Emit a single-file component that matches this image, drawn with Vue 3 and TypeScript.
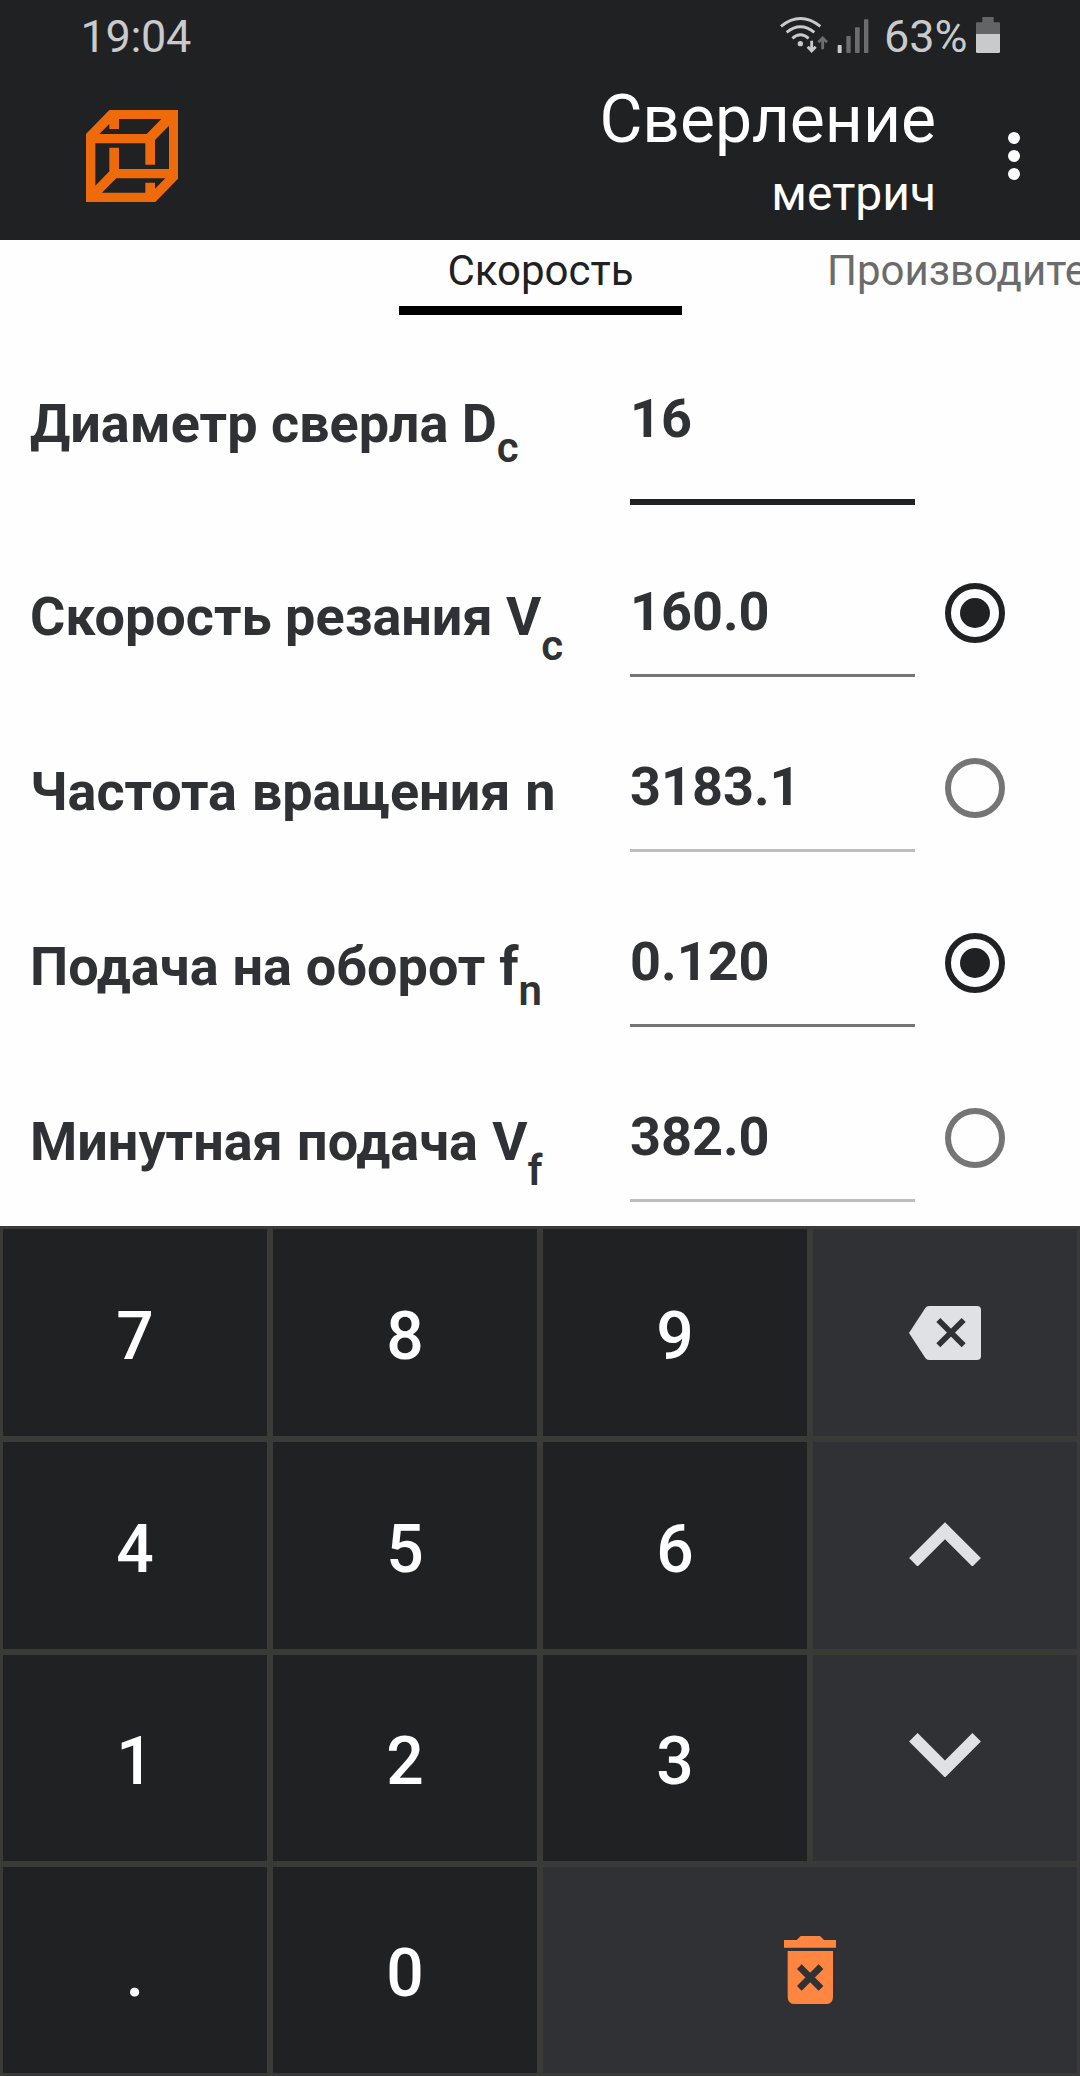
<script setup lang="ts">
import { ref } from 'vue'

interface Field {
  id: string
  label: string
  sub?: string
  subDrop?: number
  value: string
  mode: 'focused' | 'enabled' | 'disabled'
  radio?: boolean
}

const fields = ref<Field[]>([
  { id: 'dc', label: 'Диаметр сверла D', sub: 'c', subDrop: 20, value: '16', mode: 'focused' },
  { id: 'vc', label: 'Скорость резания V', sub: 'c', subDrop: 25, value: '160.0', mode: 'enabled', radio: true },
  { id: 'n', label: 'Частота вращения n', value: '3183.1', mode: 'disabled', radio: false },
  { id: 'fn', label: 'Подача на оборот f', sub: 'n', subDrop: 20, value: '0.120', mode: 'enabled', radio: true },
  { id: 'vf', label: 'Минутная подача V', sub: 'f', subDrop: 25, value: '382.0', mode: 'disabled', radio: false },
])

const keys: string[] = ['7', '8', '9', 'back', '4', '5', '6', 'up', '1', '2', '3', 'down', '.', '0', 'clear']
const isAction = (k: string) => k.length > 1
</script>

<template>
  <div class="screen">
    <div class="status">
      <span class="time">19:04</span>
      <svg class="signal" viewBox="60 45 270 117" width="90" height="39">
        <g fill="none" stroke="#c9cacc" stroke-width="8.5">
          <path d="M63 79Q121 32 181 79" />
          <path d="M80 97Q121 64 163 97" />
          <path d="M97 115Q121 94 146 115" />
          <path d="M155 122V153M143 140L155 153L167 140" />
          <path d="M188 148V114M175 127L188 114L201 127" stroke="#6c6d6f" />
        </g>
        <circle cx="121" cy="131" r="8" fill="#c9cacc" />
        <rect x="233" y="135" width="12" height="24" rx="2" fill="#c9cacc" />
        <g fill="#6c6d6f">
          <rect x="259" y="108" width="13" height="51" rx="2" />
          <rect x="285" y="82" width="14" height="77" rx="2" />
          <rect x="312" y="58" width="13" height="101" rx="2" />
        </g>
      </svg>
      <span class="percent">63%</span>
      <svg class="battery" viewBox="0 0 72 108" width="24" height="36">
        <path d="M19 0H53V16H69Q72 16 72 19V51H0V19Q0 16 3 16H19Z" fill="#636466" />
        <path d="M0 51H72V104Q72 108 68 108H4Q0 108 0 104Z" fill="#c9cacc" />
      </svg>
    </div>

    <header class="bar">
      <svg class="logo" viewBox="78 330 276 276" width="92" height="92">
        <path
          fill="#ee6a0b"
          fill-rule="evenodd"
          d="M148 330H354V536L286 606H78V402Z M118 402L148 372V387H177V357H304L260 402Z M106 430H256V494H285V420L327 377V507H177V443H148V514L106 557Z M169 535H316L285 566V548H256V578H126Z"
        />
      </svg>
      <div class="titles">
        <div class="title">Сверление</div>
        <div class="subtitle">метрич</div>
      </div>
      <svg class="menu" viewBox="0 0 12 48" width="12" height="48" fill="#fff">
        <circle cx="6" cy="6" r="6" />
        <circle cx="6" cy="24" r="6" />
        <circle cx="6" cy="42" r="6" />
      </svg>
    </header>

    <nav class="tabs">
      <div class="tab active">Скорость</div>
      <div class="tab">Производительность</div>
    </nav>

    <main class="form">
      <div v-for="f in fields" :key="f.id" class="row" :class="[f.mode, `field-${f.id}`]">
        <div class="label">
          {{ f.label }}<sub v-if="f.sub" :style="{ verticalAlign: `-${f.subDrop}px` }">{{ f.sub }}</sub>
        </div>
        <div class="value">{{ f.value }}</div>
        <svg v-if="f.radio !== undefined" class="radio" :class="{ on: f.radio }" viewBox="0 0 60 60" width="60" height="60">
          <circle cx="30" cy="30" r="27" fill="none" stroke="currentColor" stroke-width="6" />
          <circle v-if="f.radio" cx="30" cy="30" r="15" fill="currentColor" />
        </svg>
      </div>
    </main>

    <div class="keypad">
      <div v-for="k in keys" :key="k" class="key" :class="[{ action: isAction(k) }, isAction(k) ? k : '']">
        <span v-if="!isAction(k)">{{ k }}</span>
        <svg v-else-if="k === 'back'" viewBox="0 0 216 162" width="72" height="54">
          <path d="M60 0H204Q216 0 216 12V150Q216 162 204 162H60Q53 162 49 156L0 81L49 6Q53 0 60 0Z" fill="#dfe1e5" />
          <path d="M88 42L164 118M164 42L88 118" stroke="#303134" stroke-width="17" />
        </svg>
        <svg v-else-if="k === 'up'" viewBox="0 0 216 134" width="72" height="44.7">
          <path d="M13 121L108 26L203 121" fill="none" stroke="#dfe1e5" stroke-width="36" />
        </svg>
        <svg v-else-if="k === 'down'" viewBox="0 0 216 134" width="72" height="44.7">
          <path d="M13 13L108 108L203 13" fill="none" stroke="#dfe1e5" stroke-width="36" />
        </svg>
        <svg v-else viewBox="0 0 158 204" width="52.7" height="68">
          <path d="M0 12H38L50 0H108L120 12H158V35H0Z M11 45H147V182Q147 204 125 204H33Q11 204 11 182Z" fill="#ff8640" />
          <path d="M46 92L111 157M111 92L46 157" stroke="#303134" stroke-width="20" />
        </svg>
      </div>
    </div>
  </div>
</template>

<style>
body {
  margin: 0;
  background: #fefefe;
}
</style>

<style scoped>
.screen {
  width: 1080px;
  height: 2076px;
  overflow: hidden;
  display: flex;
  flex-direction: column;
  font-family: Roboto, 'Noto Sans', sans-serif;
  background: #fefefe;
}
.status {
  height: 72px;
  flex: none;
  display: flex;
  align-items: flex-start;
  background: #202123;
  color: #c9cacc;
  font-size: 45px;
  line-height: 54px;
  box-sizing: border-box;
  padding: 10px 80px 0 80.5px;
}
.time {
  flex: 1;
  letter-spacing: -0.3px;
}
.signal {
  margin-top: 5px;
}
.percent {
  box-sizing: border-box;
  width: 106px;
  padding-left: 14px;
}
.battery {
  margin-top: 7px;
}
.bar {
  height: 168px;
  flex: none;
  display: flex;
  background: #202123;
  color: #fff;
}
.logo {
  margin: 38px 0 0 86px;
}
.titles {
  flex: 1;
  text-align: right;
  padding-right: 72px;
}
.title {
  font-size: 66px;
  line-height: 78px;
  margin-top: 9px;
}
.subtitle {
  font-size: 48px;
  line-height: 58px;
  margin-top: 6px;
}
.menu {
  margin: 60px 60px 0 0;
}
.tabs {
  height: 75px;
  flex: none;
  display: flex;
  margin-left: 399px;
  gap: 97px;
  overflow: hidden;
  font-size: 42px;
  line-height: 60px;
  color: #6b6b6b;
}
.tab {
  box-sizing: border-box;
  height: 75px;
  flex: none;
  padding: 1px 48px 0;
}
.tab.active {
  width: 283px;
  padding: 1px 0 0;
  text-align: center;
  color: #202123;
  border-bottom: 9px solid #000;
}
.form {
  flex: none;
  height: 911px;
  padding-top: 15px;
  box-sizing: border-box;
  color: #303134;
  font-size: 54px;
  line-height: 60px;
  font-weight: 700;
}
.row {
  display: flex;
  height: 175px;
  align-items: stretch;
}
.row.focused {
  margin-bottom: -3px;
}
.label {
  width: 600px;
  padding: 85px 0 0 30px;
  box-sizing: border-box;
  white-space: nowrap;
}
.focused .label {
  padding-top: 64px;
}
.label sub {
  font-size: 42px;
  line-height: 0;
  font-weight: 600;
}
.field-n .label {
  word-spacing: 1.3px;
}
.field-fn .label {
  word-spacing: 0.5px;
}
.field-vf .label {
  word-spacing: 0.8px;
}
.value {
  width: 285px;
  margin: 0 30px;
  padding-top: 80px;
  box-sizing: border-box;
  border-bottom: 3px solid #757575;
}
.focused .value {
  padding-top: 59px;
  border-bottom: 6px solid #202123;
}
.disabled .value {
  border-bottom-color: #bdbdbd;
}
.radio {
  margin-top: 81px;
  color: #757575;
}
.radio.on {
  color: #202123;
}
.keypad {
  display: grid;
  grid-template-columns: repeat(4, 270px);
  grid-template-rows: 213px 213px 212px 212px;
  background: #3a3a38;
}
.key {
  margin: 3px;
  background: #202123;
  color: #fff;
  display: flex;
  align-items: center;
  justify-content: center;
  font-size: 66px;
  font-weight: 500;
}
.key span {
  padding-top: 7px;
}
.key.action {
  background: #303134;
}
.key.up svg {
  margin-bottom: 3px;
}
.key.down svg {
  margin-bottom: 6px;
}
.key.clear {
  grid-column: span 2;
}
</style>
